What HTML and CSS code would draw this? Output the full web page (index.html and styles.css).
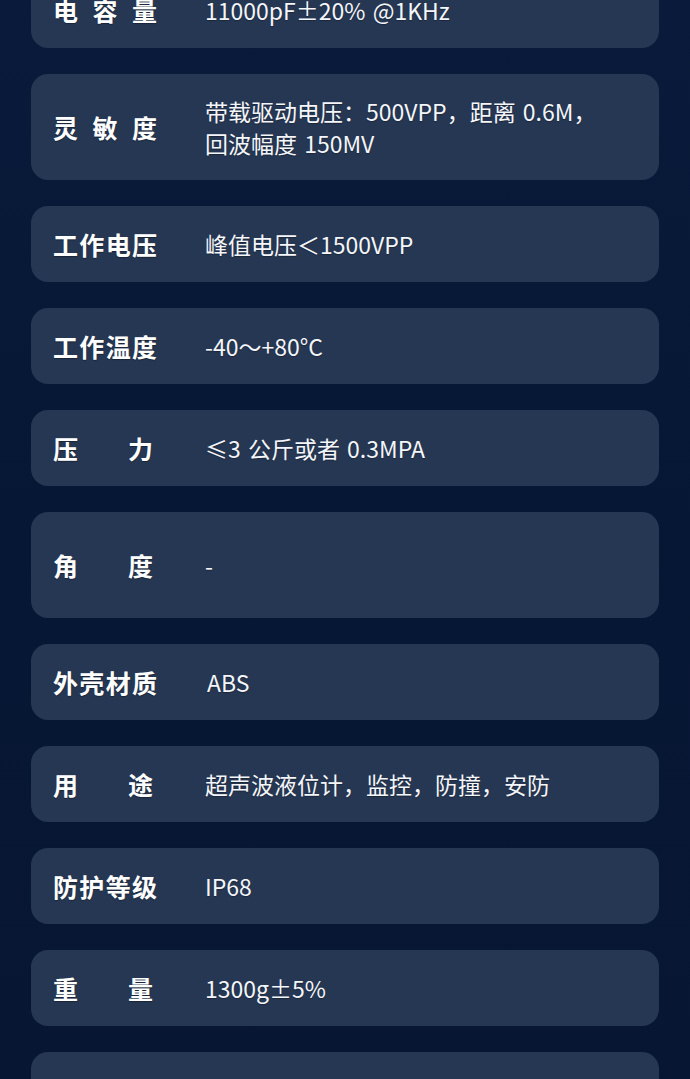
FILE: index.html
```html
<!DOCTYPE html>
<html lang="zh-CN">
<head>
<meta charset="utf-8">
<title>参数</title>
<link rel="stylesheet" href="styles.css">
</head>
<body>
<main class="specs">
  <div class="card"><div class="label">电容量</div><div class="value">11000pF±20% @1KHz</div></div>
  <div class="card card--multi"><div class="label">灵敏度</div><div class="value">带载驱动电压：500VPP，距离 0.6M，<br>回波幅度 150MV</div></div>
  <div class="card"><div class="label">工作电压</div><div class="value">峰值电压＜1500VPP</div></div>
  <div class="card"><div class="label">工作温度</div><div class="value">-40～+80°C</div></div>
  <div class="card"><div class="label label--pair">压　　力</div><div class="value">≤3 公斤或者 0.3MPA</div></div>
  <div class="card card--tall"><div class="label label--pair">角　　度</div><div class="value">-</div></div>
  <div class="card"><div class="label">外壳材质</div><div class="value value--inset">ABS</div></div>
  <div class="card"><div class="label label--pair">用　　途</div><div class="value">超声波液位计，监控，防撞，安防</div></div>
  <div class="card"><div class="label">防护等级</div><div class="value">IP68</div></div>
  <div class="card"><div class="label label--pair">重　　量</div><div class="value">1300g±5%</div></div>
  <div class="card card--multi"><div class="label label--pair">包　　装</div><div class="value">1 件/箱<br>纸箱包装</div></div>
</main>
</body>
</html>
```
FILE: styles.css
```css
html, body {
  margin: 0;
  padding: 0;
}
body {
  width: 690px;
  height: 1079px;
  overflow: hidden;
  background: linear-gradient(180deg, #0a1a3a 0%, #061735 50%, #071733 100%);
  font-family: "Noto Sans CJK SC", "Noto Sans", sans-serif;
  color: #ffffff;
}
.specs {
  display: flex;
  flex-direction: column;
  gap: 26px;
  padding: 0 31px;
  margin-top: -28px;
}
.card {
  display: flex;
  align-items: center;
  gap: 48px;
  padding: 22px 22px;
  background: #263753;
  border-radius: 17px;
  min-height: 32px;
}
.card--multi {
  padding-top: 21px;
  padding-bottom: 21px;
}
.card--tall {
  min-height: 62px;
}
.label {
  flex: 0 0 104px;
  width: 104px;
  font-size: 25px;
  font-weight: 700;
  line-height: 32px;
  text-align: justify;
  text-align-last: justify;
  white-space: nowrap;
  text-shadow: 0 1px 1px rgba(0, 0, 0, 0.35);
}
.label--pair {
  text-align: left;
  text-align-last: left;
}
.value {
  flex: 1;
  font-size: 23px;
  font-weight: 400;
  line-height: 32px;
  word-spacing: 2px;
  color: #f4f6fa;
  text-shadow: 0 1px 1px rgba(0, 0, 0, 0.3);
}
.value--inset {
  padding-left: 2px;
}
```
